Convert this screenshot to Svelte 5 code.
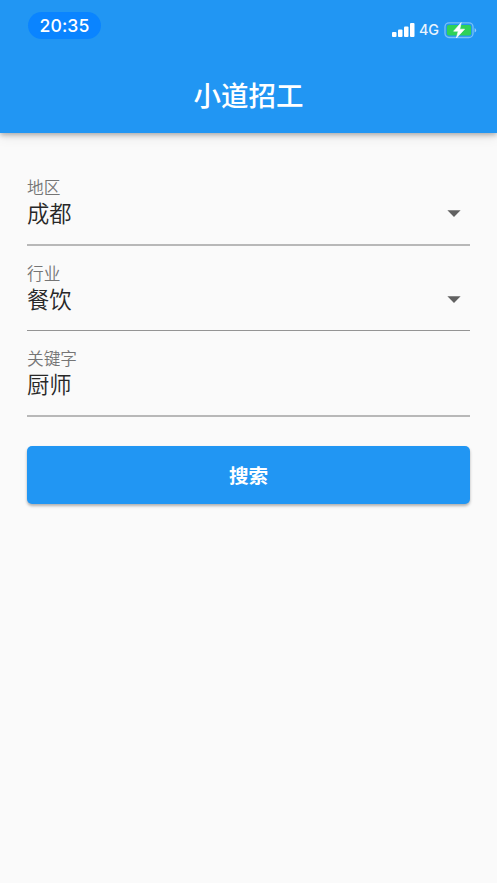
<script lang="ts">
	type Field = { id: string; label: string; value: string; dropdown: boolean };

	const fields: Field[] = [
		{ id: 'area', label: '地区', value: '成都', dropdown: true },
		{ id: 'industry', label: '行业', value: '餐饮', dropdown: true },
		{ id: 'keyword', label: '关键字', value: '厨师', dropdown: false }
	];
</script>

<main>
	<header>
		<div class="status">
			<span class="time">20:35</span>
			<div class="indicators">
				<svg class="signal" width="23" height="14" viewBox="0 0 23 14" fill="#fff">
					<rect x="0" y="9" width="4.5" height="5" rx="1" />
					<rect x="6" y="6.5" width="4.5" height="7.5" rx="1" />
					<rect x="12" y="3.5" width="4.5" height="10.5" rx="1" />
					<rect x="18" y="0" width="4.5" height="14" rx="1" />
				</svg>
				<span class="network">4G</span>
				<svg class="battery" width="33" height="18" viewBox="0 0 33 18">
					<rect x="1" y="1.9" width="28" height="14.6" rx="4" fill="none" stroke="#fff" stroke-opacity="0.4" stroke-width="1.3" />
					<rect x="2.9" y="3.9" width="24.2" height="10.7" rx="2" fill="#30d158" />
					<path d="M30.6 7v4.6q1.5-.7 1.5-2.3T30.6 7z" fill="#fff" fill-opacity="0.5" />
					<path d="M17.2 1.6 9.6 10.2h4.6L12.4 17l8.2-8.8h-4.8z" fill="#fff" stroke="#fff" stroke-width="0.6" stroke-linejoin="round" />
				</svg>
			</div>
		</div>
		<h1>小道招工</h1>
	</header>

	<form on:submit|preventDefault>
		{#each fields as field (field.id)}
			<div class="field">
				<span class="label">{field.label}</span>
				<div class="value">
					<span>{field.value}</span>
					{#if field.dropdown}
						<svg width="14" height="7" viewBox="0 0 14 7">
							<path d="M0.4 0.3h13.2L7 6.9z" fill="#616161" />
						</svg>
					{/if}
				</div>
			</div>
		{/each}
		<button type="submit">搜索</button>
	</form>
</main>

<style>
	:global(body) {
		background-color: #fafafa;
	}

	main {
		min-height: 883px;
		box-sizing: border-box;
		font-family: 'Noto Sans CJK SC', sans-serif;
		color: #282828;
	}

	header {
		height: 132.5px;
		background-color: #2196f3;
		color: #fff;
		box-shadow: 0 2px 5px rgba(0, 0, 0, 0.28), 0 4px 12px rgba(0, 0, 0, 0.08);
	}

	.status {
		height: 57px;
		box-sizing: border-box;
		padding: 12px 20px 0 28px;
		display: flex;
		justify-content: space-between;
		align-items: flex-start;
	}

	.time {
		width: 73px;
		height: 27px;
		border-radius: 14px;
		background-color: #0a84ff;
		font: 500 17.6px/28px Inter, sans-serif;
		letter-spacing: 0.1px;
		text-align: center;
	}

	.indicators {
		display: flex;
		align-items: center;
		padding-top: 9px;
	}

	.network {
		margin: 0 5px 0 4px;
		font: 500 14.3px/18px Inter, sans-serif;
		opacity: 0.9;
	}

	h1 {
		margin: 0;
		font-size: 27.5px;
		font-weight: 500;
		line-height: 74px;
		text-align: center;
	}

	form {
		padding: 27.5px 27px 0;
	}

	.field {
		height: 86px;
		box-sizing: border-box;
		padding-top: 17px;
		border-bottom: 2px solid #b8b8b8;
	}

	.field:nth-child(2) {
		height: 85px;
		border-bottom: 1px solid #949494;
	}

	.label {
		display: block;
		font-size: 16.7px;
		font-weight: 350;
		line-height: 20px;
		color: #757575;
	}

	.value {
		display: flex;
		align-items: center;
		justify-content: space-between;
		padding: 1px 9px 0 0;
		font-size: 22.3px;
		font-weight: 350;
		line-height: 28px;
	}

	.value svg {
		margin-top: 2px;
	}

	button {
		display: block;
		width: 100%;
		height: 58px;
		margin-top: 28.5px;
		padding: 0;
		border: none;
		border-radius: 5px;
		background-color: #2196f3;
		color: #fff;
		font-family: inherit;
		font-size: 19.6px;
		font-weight: 700;
		box-shadow: 0 2px 3px rgba(0, 0, 0, 0.3);
	}
</style>
